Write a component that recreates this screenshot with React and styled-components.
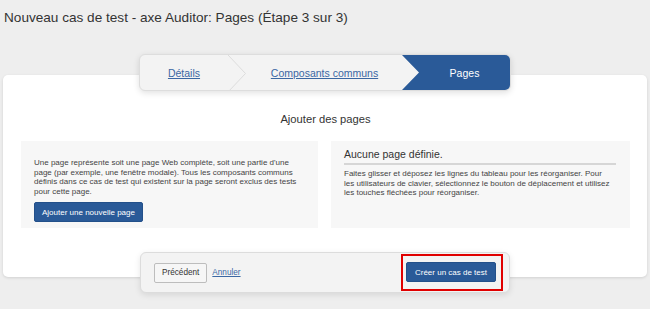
import React from "react";
import styled, { createGlobalStyle } from "styled-components";

const GlobalStyle = createGlobalStyle`
  html, body {
    margin: 0;
    padding: 0;
    background: #eeeeee;
    font-family: "Liberation Sans", Arial, sans-serif;
    color: #333;
  }
`;

function App() {
  return (
    <>
      <GlobalStyle />
      <Page>
        <Title>Nouveau cas de test - axe Auditor: Pages (Étape 3 sur 3)</Title>
        <Stepper>
          <Step width={88}>
            <StepLink href="#">Détails</StepLink>
          </Step>
          <Separator width="18" height="37" viewBox="0 0 18 37">
            <polyline points="0,0 17.5,18.5 0,37" fill="none" stroke="#dcdcdc" strokeWidth="1" />
          </Separator>
          <Step width={157}>
            <StepLink href="#">Composants communs</StepLink>
          </Step>
          <ActiveStep>Pages</ActiveStep>
        </Stepper>
        <Card>
          <CardTitle>Ajouter des pages</CardTitle>
          <Panels>
            <Panel>
              <Text>
                Une page représente soit une page Web complète, soit une partie d'une
                page (par exemple, une fenêtre modale). Tous les composants communs
                définis dans ce cas de test qui existent sur la page seront exclus des tests
                pour cette page.
              </Text>
              <PrimaryButton>Ajouter une nouvelle page</PrimaryButton>
            </Panel>
            <Panel>
              <PanelHeading>Aucune page définie.</PanelHeading>
              <Text inset={7}>
                Faites glisser et déposez les lignes du tableau pour les réorganiser. Pour
                les utilisateurs de clavier, sélectionnez le bouton de déplacement et utilisez
                les touches fléchées pour réorganiser.
              </Text>
            </Panel>
          </Panels>
        </Card>
        <Footer>
          <FooterLeft>
            <SecondaryButton>Précédent</SecondaryButton>
            <CancelLink href="#">Annuler</CancelLink>
          </FooterLeft>
          <Highlight>
            <PrimaryButton wide>Créer un cas de test</PrimaryButton>
          </Highlight>
        </Footer>
      </Page>
    </>
  );
}

export default App;

const Page = styled.div`
  width: 650px;
  height: 309px;
  padding: 0 3px;
  box-sizing: border-box;
  display: flex;
  flex-direction: column;
  align-items: center;
  overflow: hidden;
`;

const Title = styled.h1`
  align-self: flex-start;
  margin: 9px 0 0 1px;
  font-size: 13.6px;
  font-weight: normal;
  line-height: 17px;
  color: #333;
`;

const Stepper = styled.div`
  position: relative;
  z-index: 2;
  margin-top: 28px;
  width: 372px;
  height: 37px;
  display: flex;
  background: #f3f3f3;
  border: 1px solid #dddddd;
  border-radius: 6px;
  box-sizing: border-box;
  overflow: hidden;
  box-shadow: 0 2px 6px rgba(0, 0, 0, 0.12);
`;

const Step = styled.div`
  width: ${(p) => p.width}px;
  flex: none;
  display: flex;
  align-items: center;
  justify-content: center;
`;

const Separator = styled.svg`
  flex: none;
  display: block;
`;

const StepLink = styled.a`
  font-size: 10.5px;
  color: #3b67a3;
  text-decoration: underline;
`;

const ActiveStep = styled.div`
  flex: 1;
  margin-left: -1px;
  display: flex;
  align-items: center;
  justify-content: center;
  padding-left: 17px;
  background: #2a5a98;
  color: #fff;
  font-size: 10.5px;
  clip-path: polygon(0 0, 100% 0, 100% 100%, 0 100%, 17px 50%);
`;

const Card = styled.div`
  align-self: stretch;
  margin-top: -16px;
  height: 202px;
  box-sizing: border-box;
  background: #fff;
  border-radius: 5px;
  box-shadow: 0 1px 3px rgba(0, 0, 0, 0.12);
  padding: 37px 17px 0 18px;
  display: flex;
  flex-direction: column;
`;

const CardTitle = styled.h2`
  margin: 0;
  text-align: center;
  font-size: 11.2px;
  font-weight: normal;
  line-height: 14px;
  color: #333;
`;

const Panels = styled.div`
  margin-top: 15px;
  display: grid;
  grid-template-columns: 297px 299px;
  column-gap: 13px;
  height: 87px;
`;

const Panel = styled.div`
  background: #f7f7f7;
  padding: 7px 13px 0 13px;
  display: flex;
  flex-direction: column;
  align-items: flex-start;
`;

const PanelHeading = styled.div`
  align-self: stretch;
  margin-right: 1px;
  font-size: 10.5px;
  line-height: 12px;
  color: #333;
  padding-bottom: 3px;
  border-bottom: 2px solid #d6d6d6;
  margin-bottom: 4px;
`;

const Text = styled.p`
  margin: 10px 0 0 0;
  padding-right: ${(p) => p.inset || 0}px;
  font-size: 8px;
  line-height: 9.6px;
  color: #444;

  ${PanelHeading} + & {
    margin-top: 0;
  }
`;

const PrimaryButton = styled.button`
  margin-top: ${(p) => (p.wide ? 0 : 6)}px;
  height: 20px;
  padding: 0 ${(p) => (p.wide ? 8 : 7)}px;
  background: #2a5a98;
  border: 1px solid #23508a;
  border-radius: 2px;
  color: #fff;
  font-family: "Liberation Sans", Arial, sans-serif;
  font-size: 8px;
  cursor: pointer;
`;

const Footer = styled.div`
  position: relative;
  z-index: 2;
  margin-top: -25px;
  width: 370px;
  height: 41px;
  box-sizing: border-box;
  background: #f3f3f3;
  border: 1px solid #dcdcdc;
  border-radius: 6px;
  box-shadow: 0 2px 6px rgba(0, 0, 0, 0.1);
  display: flex;
  align-items: center;
  justify-content: space-between;
  padding: 0 6px 0 13px;
`;

const FooterLeft = styled.div`
  display: flex;
  align-items: center;
  gap: 5px;
`;

const SecondaryButton = styled.button`
  height: 20px;
  padding: 0 7px;
  background: #f6f6f6;
  border: 1px solid #bdbdbd;
  border-radius: 2px;
  color: #333;
  font-family: "Liberation Sans", Arial, sans-serif;
  font-size: 8.2px;
`;

const CancelLink = styled.a`
  font-size: 8.2px;
  color: #3b67a3;
  text-decoration: underline;
`;

const Highlight = styled.div`
  border: 2px solid #e00000;
  padding: 6px 5px 7px 3px;
  display: flex;
`;
